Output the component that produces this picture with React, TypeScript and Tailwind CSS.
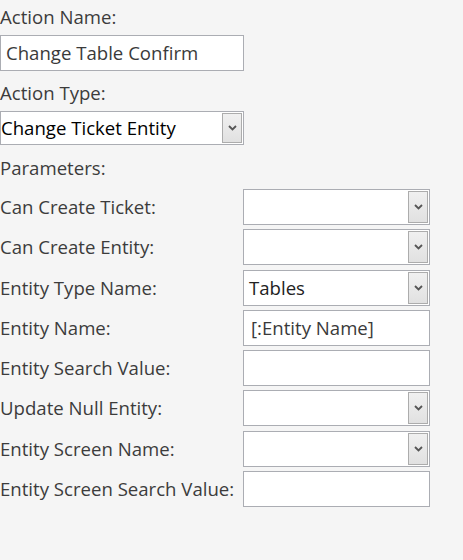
import React from 'react';

const font = { fontFamily: '"Open Sans", "Noto Sans", sans-serif' };

function Chevron() {
  return (
    <svg width="9" height="6" viewBox="0 0 9 6" className="block">
      <path d="M1 1 L4.5 4.5 L8 1" fill="none" stroke="#555" strokeWidth="1.8" />
    </svg>
  );
}

function DropButton() {
  return (
    <div className="flex h-full w-[20px] items-center justify-center border border-[#acacac] bg-gradient-to-b from-[#f0f0f0] to-[#e1e1e1]">
      <Chevron />
    </div>
  );
}

function Select({ value, className }: { value?: string; className: string }) {
  return (
    <div className={`flex items-stretch border border-[#abadb3] bg-white ${className}`}>
      <div className="flex flex-1 items-center truncate pl-[5px] text-[#222]">{value}</div>
      <div className="py-[1px] pr-[1px]">
        <DropButton />
      </div>
    </div>
  );
}

function TextBox({ value, className }: { value?: string; className: string }) {
  return (
    <div className={`flex items-center border border-[#abadb3] bg-white pl-[5px] text-[#3a3a3a] ${className}`}>
      {value}
    </div>
  );
}

const params: { label: string; kind: 'select' | 'text'; value?: string }[] = [
  { label: 'Can Create Ticket:', kind: 'select' },
  { label: 'Can Create Entity:', kind: 'select' },
  { label: 'Entity Type Name:', kind: 'select', value: 'Tables' },
  { label: 'Entity Name:', kind: 'text', value: '[:Entity Name]' },
  { label: 'Entity Search Value:', kind: 'text' },
  { label: 'Update Null Entity:', kind: 'select' },
  { label: 'Entity Screen Name:', kind: 'select' },
  { label: 'Entity Screen Search Value:', kind: 'text' },
];

export default function App() {
  return (
    <div className="h-[560px] w-[463px] bg-[#f5f5f5] text-[18.6px] leading-[26px] text-[#3c3c3c]" style={font}>
      <div className="flex flex-col">
        <div className="h-[35px] pt-[4px]">Action Name:</div>
        <TextBox value="Change Table Confirm" className="h-[36px] w-[244px] pl-[3px]" />
        <div className="h-[40px] pt-[9px]">Action Type:</div>
        <Select value="Change Ticket Entity" className="h-[34px] w-[244px] [&>div:first-child]:pl-[0px] [&>div:first-child]:text-black" />
        <div className="h-[44px] pt-[10px]">Parameters:</div>
        <div className="flex flex-col gap-[4.3px]">
          {params.map((p) => (
            <div key={p.label} className="flex items-center">
              <div className="w-[243px] whitespace-nowrap">{p.label}</div>
              {p.kind === 'select' ? (
                <Select value={p.value} className="h-[36px] w-[187px]" />
              ) : (
                <TextBox value={p.value} className="h-[36px] w-[187px] pl-[7px]" />
              )}
            </div>
          ))}
        </div>
      </div>
    </div>
  );
}
